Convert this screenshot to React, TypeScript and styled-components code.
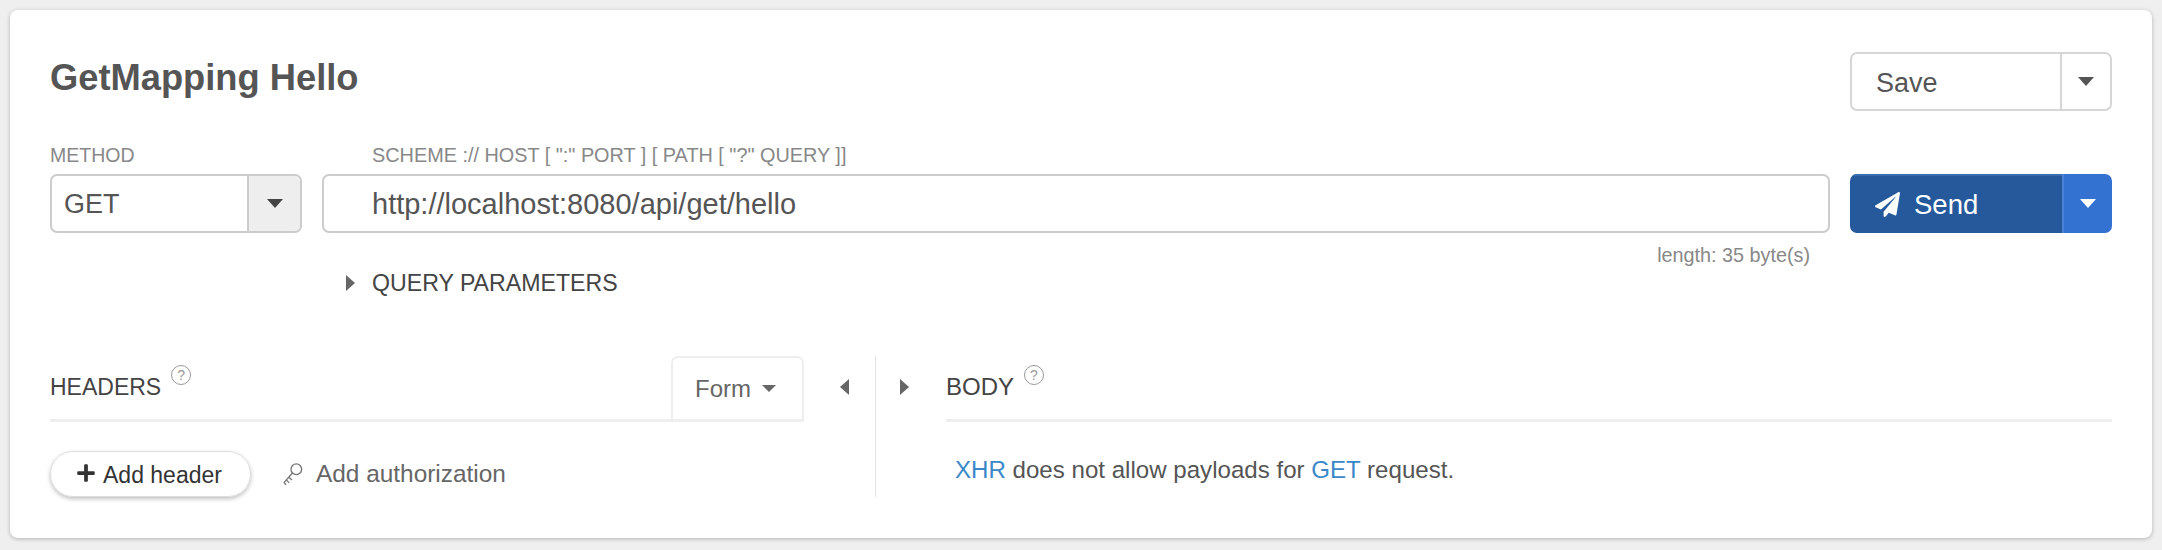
import styled, { createGlobalStyle } from "styled-components";
import { FaPaperPlane, FaPlus } from "react-icons/fa";

const GlobalStyle = createGlobalStyle`
  html, body {
    margin: 0;
    padding: 0;
    background: #efefef;
    font-family: "Liberation Sans", Arial, sans-serif;
    color: #555;
  }
`;

const HelpIcon = () => <Help>?</Help>;

const KeyIcon = () => (
  <KeySvg viewBox="0 0 22 25" fill="none" stroke="#777" strokeWidth="1.4">
    <circle cx="15" cy="7.5" r="5.6" />
    <path d="M11 11.5 L2 21.5 M4.4 18.8 L7.6 21.8 M7.2 15.8 L10.4 18.8 M2 21.5 L4.4 23.8" />
  </KeySvg>
);

export default function App() {
  return (
    <>
      <GlobalStyle />
      <Card>
        <TitleRow>
          <Title>GetMapping Hello</Title>
          <SaveGroup>
            <SaveMain>Save</SaveMain>
            <SaveToggle>
              <Caret $color="#555" />
            </SaveToggle>
          </SaveGroup>
        </TitleRow>

        <RequestGrid>
          <MethodField>
            <FieldLabel>METHOD</FieldLabel>
            <MethodSelect>
              <MethodValue>GET</MethodValue>
              <MethodToggle>
                <Caret $color="#444" />
              </MethodToggle>
            </MethodSelect>
          </MethodField>

          <UrlField>
            <UrlLabel>SCHEME :// HOST [ ":" PORT ] [ PATH [ "?" QUERY ]]</UrlLabel>
            <UrlInput>http://localhost:8080/api/get/hello</UrlInput>
            <LengthHint>length: 35 byte(s)</LengthHint>
            <QueryToggle>
              <SideArrow $dir="right" />
              <QueryTitle>QUERY PARAMETERS</QueryTitle>
            </QueryToggle>
          </UrlField>

          <SendGroup>
            <SendMain>
              <FaPaperPlane size={25} />
              Send
            </SendMain>
            <SendToggle>
              <Caret $color="#fff" />
            </SendToggle>
          </SendGroup>
        </RequestGrid>

        <Panels>
          <HeadersPanel>
            <HeadersColumn>
              <HeadersTop>
                <SectionTitle>HEADERS</SectionTitle>
                <HelpSlot>
                  <HelpIcon />
                </HelpSlot>
                <FormTab>
                  Form
                  <Caret $color="#666" $small />
                </FormTab>
              </HeadersTop>
              <HeaderActions>
                <AddHeader>
                  <PlusIcon />
                  Add header
                </AddHeader>
                <AddAuth>
                  <KeyIcon />
                  Add authorization
                </AddAuth>
              </HeaderActions>
            </HeadersColumn>
            <ArrowSlot>
              <SideArrow $dir="left" />
            </ArrowSlot>
          </HeadersPanel>

          <BodyPanel>
            <BodyArrowSlot>
              <SideArrow $dir="right" />
            </BodyArrowSlot>
            <BodyColumn>
              <BodyTop>
                <BodyTitle>BODY</BodyTitle>
                <HelpSlot>
                  <HelpIcon />
                </HelpSlot>
              </BodyTop>
              <BodyNote>
                <Accent>XHR</Accent> does not allow payloads for{" "}
                <Accent>GET</Accent> request.
              </BodyNote>
            </BodyColumn>
          </BodyPanel>
        </Panels>
      </Card>
    </>
  );
}

const Card = styled.div`
  box-sizing: border-box;
  width: 2142px;
  height: 528px;
  margin: 10px;
  padding: 42px 40px 41px 40px;
  background: #fff;
  border-radius: 8px;
  box-shadow: 0 1px 4px rgba(0, 0, 0, 0.25);
`;

const TitleRow = styled.div`
  display: flex;
  justify-content: space-between;
  align-items: flex-start;
  height: 59px;
`;

const Title = styled.h1`
  margin: 0;
  font-size: 36.3px;
  line-height: 52px;
  font-weight: 700;
  color: #555;
`;

const SaveGroup = styled.div`
  box-sizing: border-box;
  display: flex;
  width: 262px;
  height: 59px;
  border: 2px solid #d6d6d6;
  border-radius: 7px;
`;

const SaveMain = styled.div`
  flex: 1;
  padding-left: 24px;
  font-size: 27px;
  line-height: 58px;
  color: #555;
`;

const SaveToggle = styled.div`
  display: flex;
  align-items: center;
  justify-content: center;
  width: 50px;
  border-left: 2px solid #d6d6d6;
  box-sizing: border-box;
`;

const Caret = styled.span<{ $color: string; $small?: boolean }>`
  display: inline-block;
  width: 0;
  height: 0;
  border-left: ${(p) => (p.$small ? 7 : 8)}px solid transparent;
  border-right: ${(p) => (p.$small ? 7 : 8)}px solid transparent;
  border-top: ${(p) => (p.$small ? 7 : 9)}px solid ${(p) => p.$color};
`;

const RequestGrid = styled.div`
  display: grid;
  grid-template-columns: 252px 1508px 262px;
  column-gap: 20px;
  height: 245px;
`;

const MethodField = styled.div`
  padding-top: 32px;
`;

const FieldLabel = styled.div`
  height: 31px;
  font-size: 19.5px;
  line-height: 24px;
  color: #888;
`;

const MethodSelect = styled.div`
  box-sizing: border-box;
  display: flex;
  height: 59px;
  border: 2px solid #ccc;
  border-radius: 7px;
  overflow: hidden;
`;

const MethodValue = styled.div`
  flex: 1;
  padding-left: 12px;
  font-size: 27px;
  line-height: 57px;
  color: #555;
`;

const MethodToggle = styled.div`
  display: flex;
  align-items: center;
  justify-content: center;
  box-sizing: border-box;
  width: 53px;
  background: #eee;
  border-left: 2px solid #ccc;
`;

const UrlField = styled.div`
  padding-top: 32px;
`;

const UrlLabel = styled(FieldLabel)`
  padding-left: 50px;
  font-size: 19.85px;
`;

const UrlInput = styled.div`
  box-sizing: border-box;
  height: 59px;
  padding-left: 48px;
  border: 2px solid #ccc;
  border-radius: 7px;
  font-size: 29px;
  line-height: 57px;
  color: #555;
`;

const LengthHint = styled.div`
  margin-top: 10px;
  padding-right: 20px;
  text-align: right;
  font-size: 19.8px;
  line-height: 24px;
  color: #888;
`;

const QueryToggle = styled.div`
  display: flex;
  align-items: center;
  gap: 17px;
  margin-top: 1px;
  padding-left: 24px;
  height: 30px;
`;

const SectionTitle = styled.span`
  margin-bottom: 17px;
  font-size: 23px;
  line-height: 30px;
  color: #444;
`;

const QueryTitle = styled(SectionTitle)`
  margin-bottom: 0;
  font-size: 23.15px;
`;

const BodyTitle = styled(SectionTitle)`
  font-size: 24px;
`;

const SideArrow = styled.span<{ $dir: "left" | "right" }>`
  display: inline-block;
  width: 0;
  height: 0;
  border-top: 8px solid transparent;
  border-bottom: 8px solid transparent;
  border-${(p) => (p.$dir === "left" ? "right" : "left")}: 9px solid #666;
`;

const SendGroup = styled.div`
  display: flex;
  align-self: start;
  height: 59px;
  margin-top: 63px;
  border-radius: 7px;
  overflow: hidden;
`;

const SendMain = styled.div`
  flex: 1;
  display: flex;
  align-items: center;
  gap: 14px;
  padding-left: 25px;
  background: #25599c;
  border-top: 2px solid #3a6db0;
  box-sizing: border-box;
  font-size: 27.5px;
  color: #fff;
`;

const SendToggle = styled.div`
  display: flex;
  align-items: center;
  justify-content: center;
  width: 50px;
  background: #3472d2;
  border-left: 2px solid #4a82d8;
  box-sizing: border-box;
`;

const Panels = styled.div`
  display: grid;
  grid-template-columns: 826px 1fr;
  height: 141px;
`;

const HeadersPanel = styled.div`
  display: flex;
  border-right: 1px solid #e4e4e4;
`;

const HeadersColumn = styled.div`
  width: 754px;
`;

const HeadersTop = styled.div`
  display: flex;
  align-items: flex-end;
  height: 63px;
  border-bottom: 3px solid #eee;
`;

const HelpSlot = styled.span`
  align-self: flex-start;
  margin: 9px 0 0 10px;
`;

const Help = styled.span`
  display: block;
  box-sizing: border-box;
  width: 20px;
  height: 20px;
  border: 1px solid #999;
  border-radius: 50%;
  text-align: center;
  font-size: 14px;
  line-height: 18px;
  color: #999;
`;

const FormTab = styled.div`
  box-sizing: border-box;
  display: flex;
  align-items: center;
  gap: 11px;
  margin-left: auto;
  margin-bottom: -3px;
  width: 133px;
  height: 66px;
  padding-left: 22px;
  border: 2px solid #eee;
  border-bottom-width: 3px;
  border-radius: 7px 7px 0 0;
  font-size: 24px;
  color: #666;
`;

const HeaderActions = styled.div`
  display: flex;
  align-items: center;
  gap: 31px;
  margin-top: 29px;
`;

const AddHeader = styled.div`
  display: flex;
  align-items: center;
  gap: 8px;
  box-sizing: border-box;
  width: 201px;
  height: 46px;
  padding-left: 26px;
  padding-top: 2px;
  border: 1px solid #ddd;
  border-radius: 23px;
  box-shadow: 0 2px 4px rgba(0, 0, 0, 0.25);
  font-size: 23px;
  color: #333;
`;

const PlusIcon = styled(FaPlus)`
  width: 18px;
  height: 20px;
  margin-top: -5px;
`;

const AddAuth = styled.div`
  display: flex;
  align-items: center;
  gap: 13px;
  font-size: 24.4px;
  color: #666;
`;

const KeySvg = styled.svg`
  width: 21px;
  height: 24px;
`;

const ArrowSlot = styled.div`
  flex: 1;
  padding: 23px 0 0 36px;
`;

const BodyPanel = styled.div`
  display: flex;
`;

const BodyArrowSlot = styled.div`
  width: 70px;
  padding: 23px 0 0 24px;
  box-sizing: border-box;
`;

const BodyColumn = styled.div`
  flex: 1;
`;

const BodyTop = styled.div`
  display: flex;
  align-items: flex-end;
  height: 63px;
  border-bottom: 3px solid #eee;
`;

const BodyNote = styled.div`
  margin-top: 32px;
  padding-left: 9px;
  font-size: 24.1px;
  line-height: 32px;
  color: #555;
`;

const Accent = styled.span`
  color: #3b88c8;
`;
